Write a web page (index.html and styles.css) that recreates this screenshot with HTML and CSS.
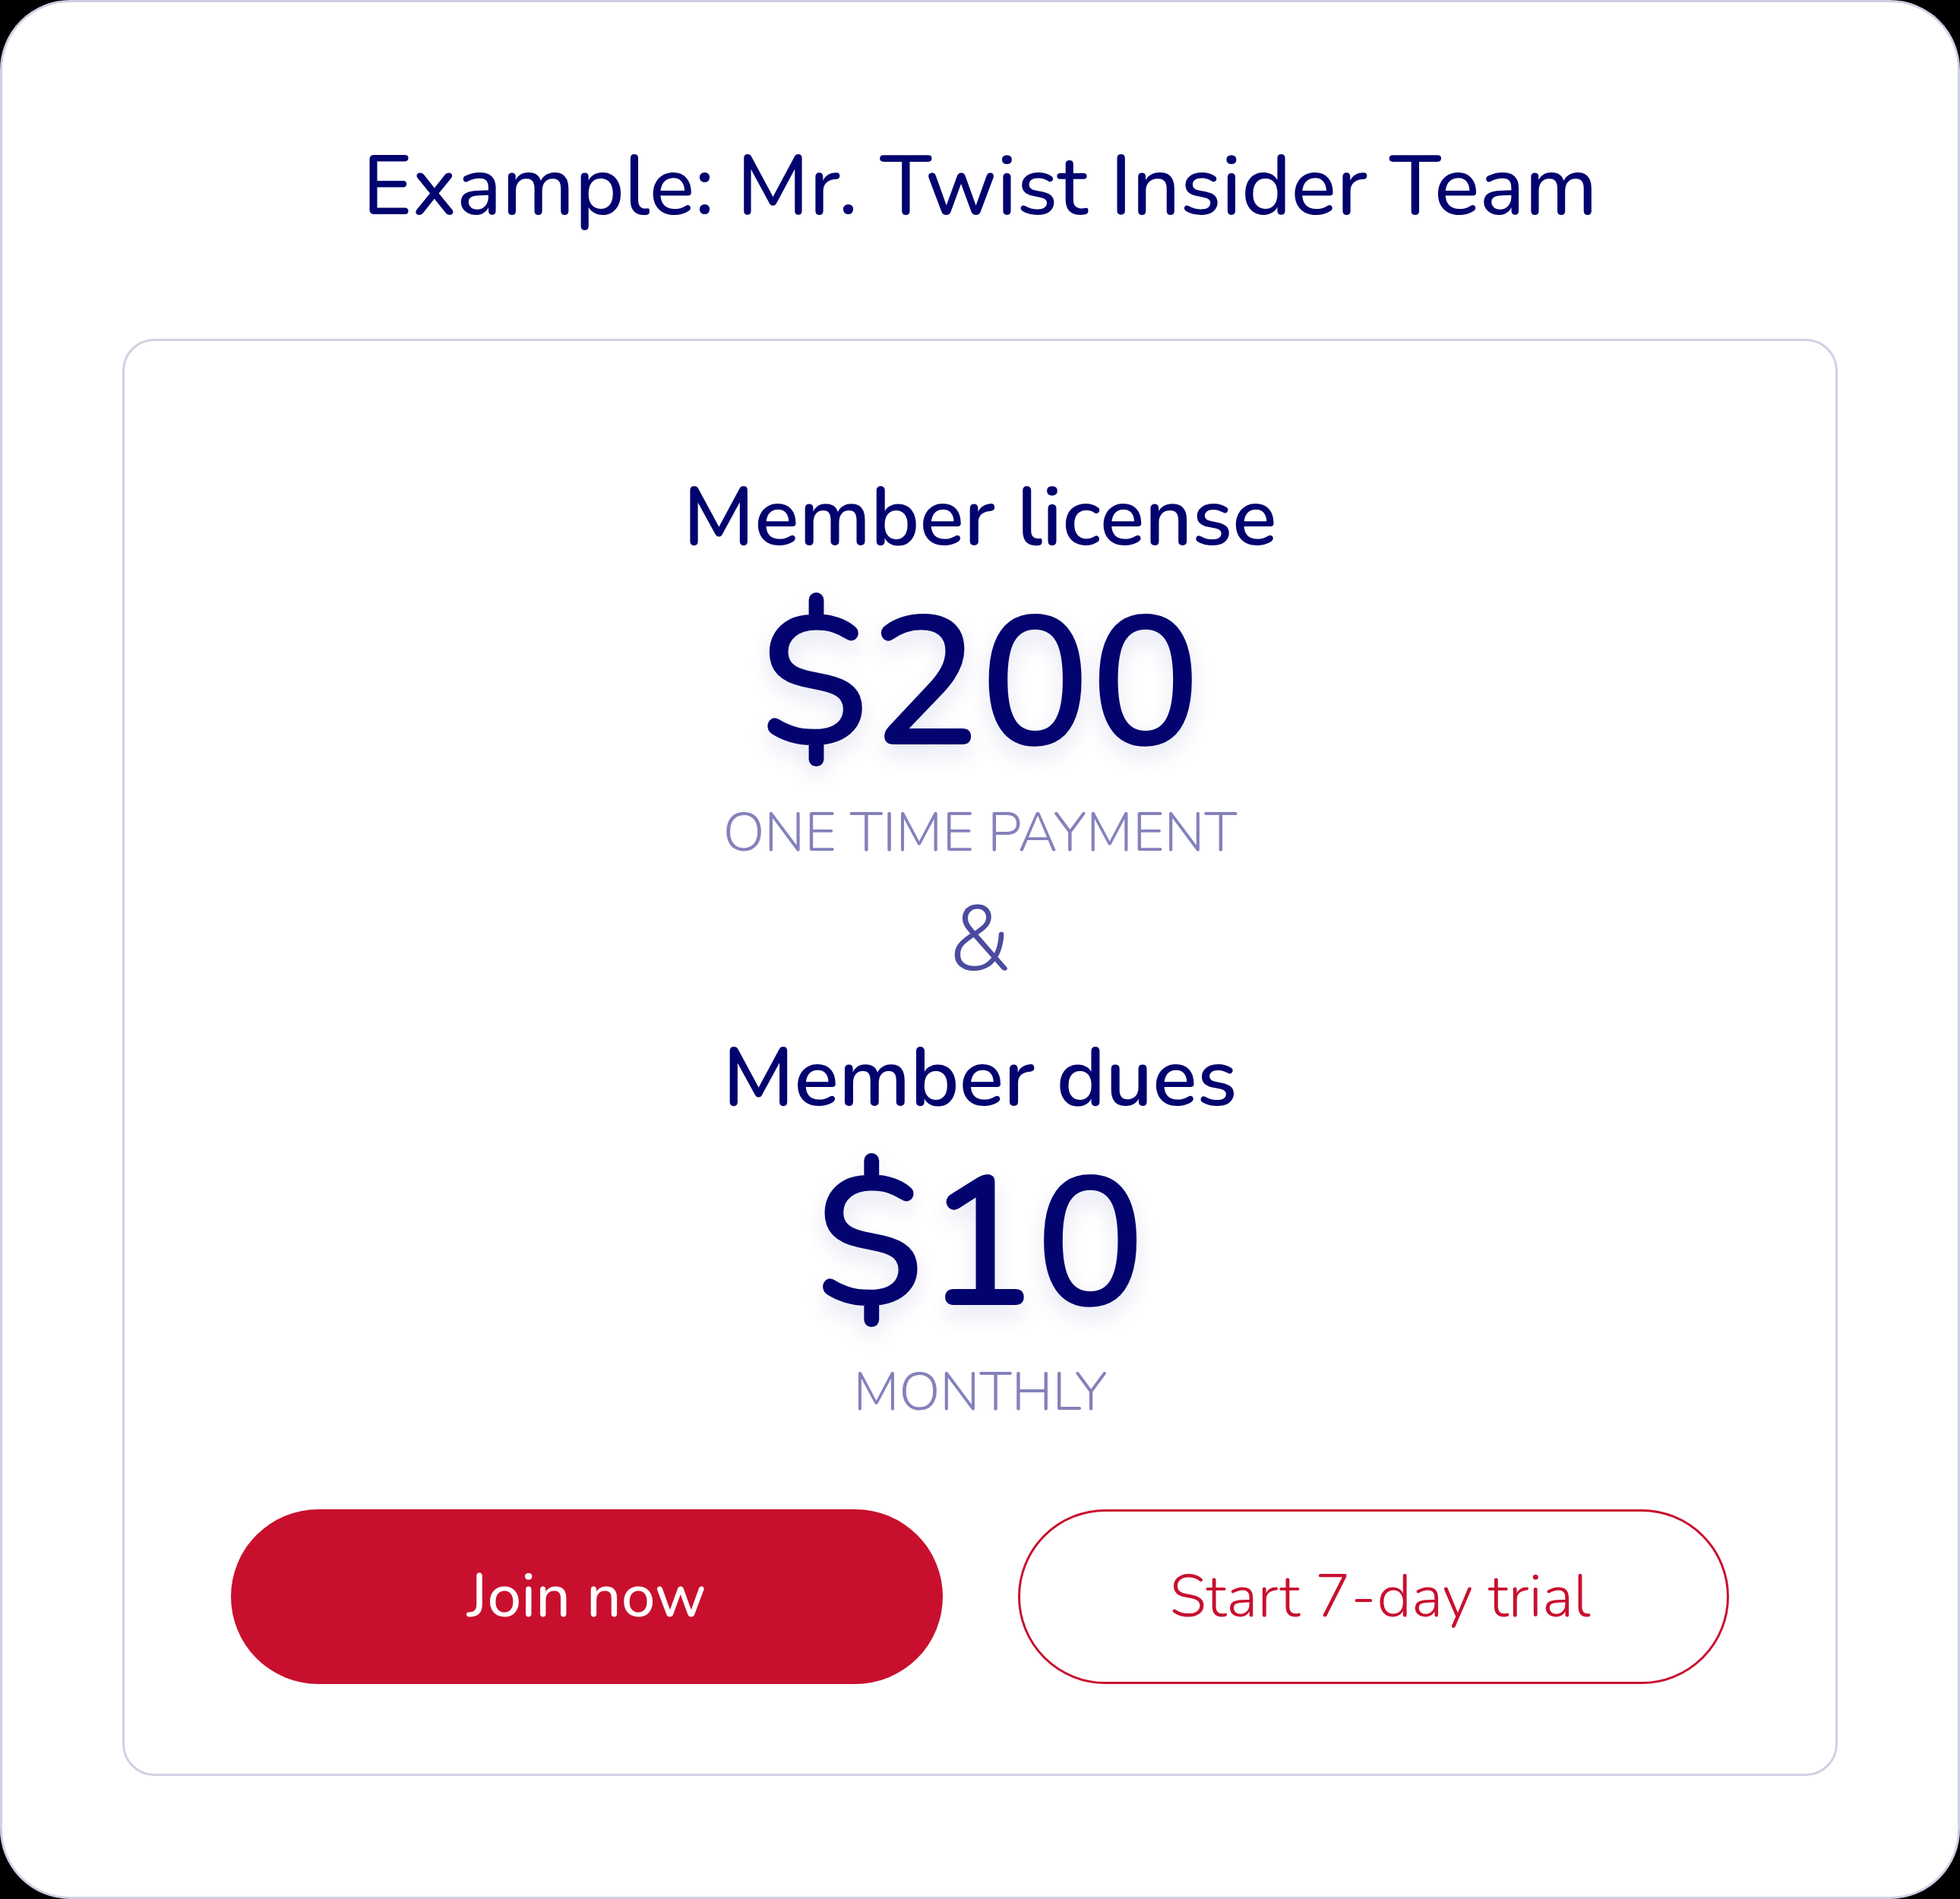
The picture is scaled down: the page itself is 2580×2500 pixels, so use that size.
FILE: index.html
```html
<!DOCTYPE html>
<html lang="en">
<head>
<meta charset="utf-8">
<title>Mr. Twist Insider Team</title>
<link rel="stylesheet" href="styles.css">
</head>
<body>
<div class="card">
  <h1 class="title">Example: Mr. Twist Insider Team</h1>
  <div class="pricing">
    <h2 class="label">Member license</h2>
    <div class="price price-first">$200</div>
    <div class="note note-first">ONE TIME PAYMENT</div>
    <div class="amp">&amp;</div>
    <h2 class="label dues">Member dues</h2>
    <div class="price price-second">$10</div>
    <div class="note note-second">MONTHLY</div>
    <div class="actions">
      <a class="btn btn-primary" href="#">Join now</a>
      <a class="btn btn-outline" href="#">Start 7-day trial</a>
    </div>
  </div>
</div>
</body>
</html>
```

FILE: styles.css
```css
html {
  background: #000;
}
body {
  margin: 0;
  font-family: "Nunito", "Lato", "Noto Sans", sans-serif;
}
.card {
  box-sizing: border-box;
  width: 2580px;
  height: 2500px;
  background: #fff;
  border: 3px solid #cfcfe3;
  border-radius: 92px;
  padding: 187px 158px 0;
  display: flex;
  flex-direction: column;
  align-items: stretch;
}
.title {
  margin: 0;
  font-size: 111.5px;
  line-height: 1;
  font-weight: 500;
  color: #03036f;
  text-align: center;
}
.pricing {
  margin-top: 144px;
  border: 3px solid #d0d0e4;
  border-radius: 42px;
  padding: 178px 140px 118px;
  display: flex;
  flex-direction: column;
  align-items: center;
}
.label {
  margin: 0;
  font-size: 109px;
  line-height: 1;
  font-weight: 600;
  color: #03036f;
}
.price {
  font-size: 242px;
  line-height: 1;
  font-weight: 600;
  color: #03036f;
  text-shadow: 0 14px 28px rgba(70, 70, 170, 0.14);
}
.price-first {
  margin-top: 43px;
}
.price-second {
  margin-top: 43px;
}
.note {
  line-height: 1;
  font-weight: 300;
  color: #8481bb;
}
.note-first {
  margin-top: 39px;
  font-size: 72px;
}
.note-second {
  margin-top: 38px;
  font-size: 71px;
}
.amp {
  margin-top: 45px;
  font-size: 121px;
  line-height: 1;
  font-weight: 300;
  color: #4b4b9f;
}
.dues {
  margin-top: 67px;
}
.actions {
  align-self: stretch;
  margin-top: 119px;
  display: grid;
  grid-template-columns: 1fr 1fr;
  gap: 99px;
}
.btn {
  box-sizing: border-box;
  height: 230px;
  border-radius: 115px;
  display: flex;
  align-items: center;
  justify-content: center;
  text-decoration: none;
}
.btn-primary {
  background: #c8102e;
  color: #fff;
  font-size: 80px;
  font-weight: 500;
}
.btn-outline {
  border: 3px solid #c8102e;
  padding-left: 18px;
  color: #c8102e;
  font-size: 79px;
  font-weight: 300;
  background: #fff;
}
```
